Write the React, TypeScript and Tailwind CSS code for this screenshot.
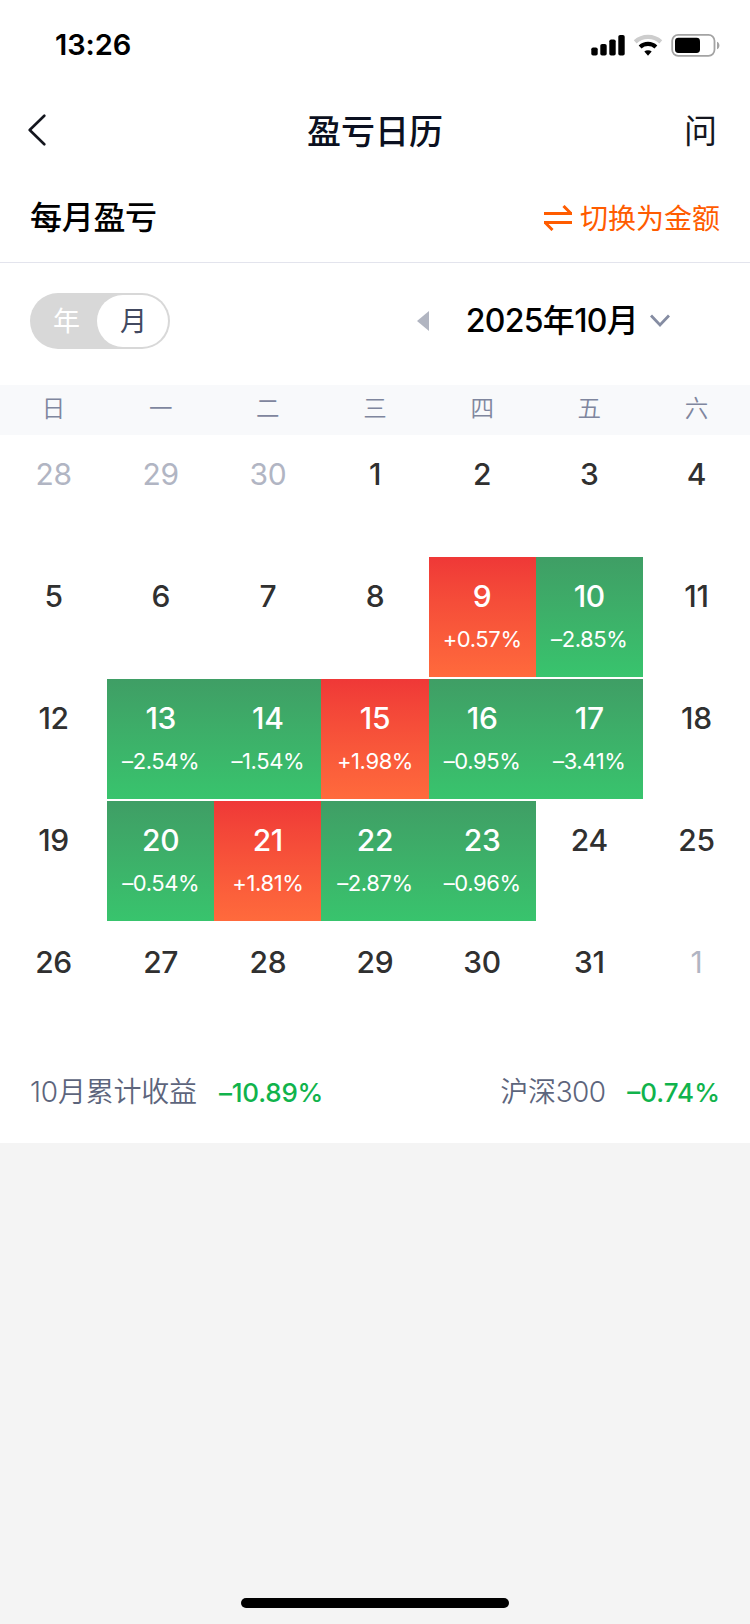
import clsx from "clsx";

type Day = {
	day: number;
	rate?: string;
	outside?: boolean;
};

const weekdays = ["日", "一", "二", "三", "四", "五", "六"];

const rates: Record<number, string> = {
	9: "+0.57%",
	10: "–2.85%",
	13: "–2.54%",
	14: "–1.54%",
	15: "+1.98%",
	16: "–0.95%",
	17: "–3.41%",
	20: "–0.54%",
	21: "+1.81%",
	22: "–2.87%",
	23: "–0.96%",
};

const days: Day[] = [
	...[28, 29, 30].map((day) => ({ day, outside: true })),
	...Array.from({ length: 31 }, (_, i) => ({
		day: i + 1,
		rate: rates[i + 1],
	})),
	{ day: 1, outside: true },
];

function StatusBar() {
	return (
		<div className="flex h-[88px] items-center justify-between pr-[30px] pl-[55px]">
			<span className="pt-0.5 text-[29px] leading-9 font-semibold tracking-[-0.1px] text-black">
				13:26
			</span>
			<svg width="130" height="24" viewBox="0 0 130 24" className="mt-0.5">
				{/* Signal */}
				<rect x="1.3" y="14.5" width="6.4" height="8" rx="1.8" />
				<rect x="10.3" y="11" width="6.4" height="11.5" rx="1.8" />
				<rect x="19.3" y="6.5" width="6.4" height="16" rx="1.8" />
				<rect x="28.3" y="2" width="6.4" height="20.5" rx="1.8" />
				{/* Wi-Fi */}
				<g fill="none" strokeWidth="4.2">
					<path d="M45.2 8.9a19 19 0 0 1 25.6 0" stroke="#cdcdcd" />
					<path d="M50.1 14a11.8 11.8 0 0 1 15.8 0" stroke="#000" />
				</g>
				<path d="M54.3 18.6a5.4 5.4 0 0 1 7.4 0L58 22.7z" />
				{/* Battery */}
				<rect
					x="82.2"
					y="1.8"
					width="42.3"
					height="21"
					rx="6"
					fill="none"
					stroke="#a3a3a3"
					strokeWidth="1.8"
				/>
				<rect x="85" y="4.8" width="25" height="15.2" rx="3.4" />
				<path d="M127 8.8c3.2 1 3.2 6.2 0 7.4z" fill="#a3a3a3" />
			</svg>
		</div>
	);
}

function NavBar() {
	return (
		<div className="grid h-[86px] grid-cols-[1fr_auto_1fr] items-center px-7">
			<svg
				width="18"
				height="32"
				viewBox="0 0 18 32"
				fill="none"
				stroke="#14161e"
				strokeWidth="2.6"
				strokeLinecap="round"
				strokeLinejoin="round"
				className="mb-0.5"
			>
				<path d="M16.3 1.7 1.7 16l14.6 14.3" />
			</svg>
			<h1 className="pt-0.5 text-[34px] leading-[50px] font-medium text-[#0b1020]">
				盈亏日历
			</h1>
			<span className="mr-[5px] justify-self-end text-[33px] leading-[48px] text-[#14161e]">
				问
			</span>
		</div>
	);
}

function MonthPicker() {
	return (
		<div className="flex h-[122px] items-start justify-between pt-[30px] pr-20 pl-[30px]">
			<div className="flex h-14 w-[140px] rounded-full bg-[#d8d8d8] p-0.5 text-[27px]">
				<span className="flex flex-1 items-center justify-center pt-0.5 pl-1 text-white">
					年
				</span>
				<span className="flex w-[71px] items-center justify-center rounded-full bg-white pt-0.5 pl-0.5 text-[#424960]">
					月
				</span>
			</div>
			<div className="flex h-14 items-center">
				<svg width="12" height="20" viewBox="0 0 12 20" fill="#b1b5c1">
					<path d="M12 0v20L0 10z" />
				</svg>
				<span className="ml-[37px] text-[32px] leading-[48px] font-medium tracking-[-0.7px] text-black">
					2025年10月
				</span>
				<svg
					width="20"
					height="14"
					viewBox="0 0 20 14"
					fill="none"
					stroke="#858ca2"
					strokeWidth="2.8"
					className="ml-3"
				>
					<path d="m1 1.5 9 9.5 9-9.5" />
				</svg>
			</div>
		</div>
	);
}

function DayCell({ day, rate, outside }: Day) {
	return (
		<div
			className={clsx(
				"flex h-[120px] flex-col items-center pt-[19px]",
				rate?.startsWith("+") &&
					"bg-gradient-to-b from-[#ef3837] to-[#ff6a3c]",
				rate?.startsWith("–") &&
					"bg-gradient-to-b from-[#3f9e65] to-[#38c46d]"
			)}
		>
			<span
				className={clsx(
					"text-[30px] leading-10 tracking-[-0.3px]",
					outside && "text-[#b1b5c3]",
					!outside && "font-medium",
					!outside && (rate ? "text-white" : "text-[#303030]")
				)}
			>
				{day}
			</span>
			{rate && (
				<span className="mt-[7px] text-[22px] leading-8 tracking-[-0.4px] text-white">
					{rate}
				</span>
			)}
		</div>
	);
}

export default function App() {
	return (
		<div className="flex min-h-[1624px] w-[750px] flex-col bg-[#f4f4f4] font-['Inter','Noto_Sans_CJK_SC',sans-serif]">
			<main className="h-[1143px] bg-white">
				<StatusBar />
				<NavBar />

				<div className="flex h-[89px] items-center justify-between border-b border-[#e3e4ed] px-[30px]">
					<h2 className="text-[32px] leading-[48px] font-medium tracking-[-0.3px] text-black">
						每月盈亏
					</h2>
					<button className="flex items-center gap-2 pt-0.5 text-[28px] leading-10 text-[#ff5c00]">
						<svg
							width="28"
							height="26"
							viewBox="0 0 28 26"
							fill="none"
							stroke="currentColor"
							strokeWidth="3"
							className="mb-0.5"
						>
							<path d="M0 8.5h28M19.5 1l7.5 7.5M28 17.5H0M8.5 25 1 17.5" />
						</svg>
						切换为金额
					</button>
				</div>

				<MonthPicker />

				<div className="grid h-[50px] grid-cols-7 items-center bg-[#f8f9fb] pb-0.5 text-center text-[23.5px] leading-9 font-[350] text-[#7f869e]">
					{weekdays.map((name) => (
						<span key={name}>{name}</span>
					))}
				</div>

				<div className="grid grid-cols-7 gap-y-0.5">
					{days.map((item, index) => (
						<DayCell key={index} {...item} />
					))}
				</div>

				<div className="flex items-center justify-between px-[30px] pt-[29px] text-[28px] leading-10 font-[350] tracking-[-0.2px] text-[#5d657c]">
					<div className="flex items-baseline gap-[22px]">
						<span>10月累计收益</span>
						<span className="text-[26px] font-medium text-[#10b34c]">
							–10.89%
						</span>
					</div>
					<div className="flex items-baseline gap-[22px]">
						<span>
							沪深<span className="tracking-[-0.7px]">300</span>
						</span>
						<span className="text-[26px] font-medium tracking-normal text-[#10b34c]">
							–0.74%
						</span>
					</div>
				</div>
			</main>

			{/* Home indicator */}
			<div className="mx-auto mt-auto mb-4 h-2.5 w-[268px] rounded-full bg-black" />
		</div>
	);
}
